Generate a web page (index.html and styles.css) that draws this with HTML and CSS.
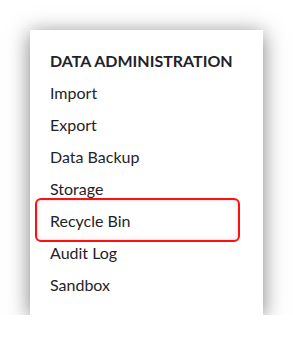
FILE: index.html
```html
<!DOCTYPE html>
<html>
<head>
<meta charset="utf-8">
<link rel="stylesheet" href="styles.css">
</head>
<body>
<div class="menu">
  <div class="menu-title">DATA ADMINISTRATION</div>
  <div class="menu-item">Import</div>
  <div class="menu-item">Export</div>
  <div class="menu-item">Data Backup</div>
  <div class="menu-item">Storage</div>
  <div class="menu-item highlighted">Recycle Bin</div>
  <div class="menu-item">Audit Log</div>
  <div class="menu-item">Sandbox</div>
</div>
</body>
</html>
```
FILE: styles.css
```css
html, body {
  margin: 0;
  padding: 0;
  background: #ffffff;
}
body {
  font-family: Lato, "Open Sans", sans-serif;
  color: #1f2329;
}
.menu {
  margin: 30px 0 0 30px;
  width: 233px;
  height: 285px;
  box-sizing: border-box;
  padding: 15px 20px 15px 20px;
  background: #ffffff;
  box-shadow: 0 3px 20px rgba(0, 0, 0, 0.5);
}
.menu-title {
  font-size: 16px;
  font-weight: 700;
  line-height: 32px;
}
.menu-item {
  font-size: 16px;
  line-height: 32px;
  position: relative;
}
.highlighted::after {
  content: "";
  position: absolute;
  top: -7px;
  bottom: -5px;
  left: -15px;
  right: 3px;
  border: 2px solid #ff1010;
  border-radius: 6px;
  box-shadow: inset 0 0 4px rgba(0, 0, 0, 0.15);
}
```
